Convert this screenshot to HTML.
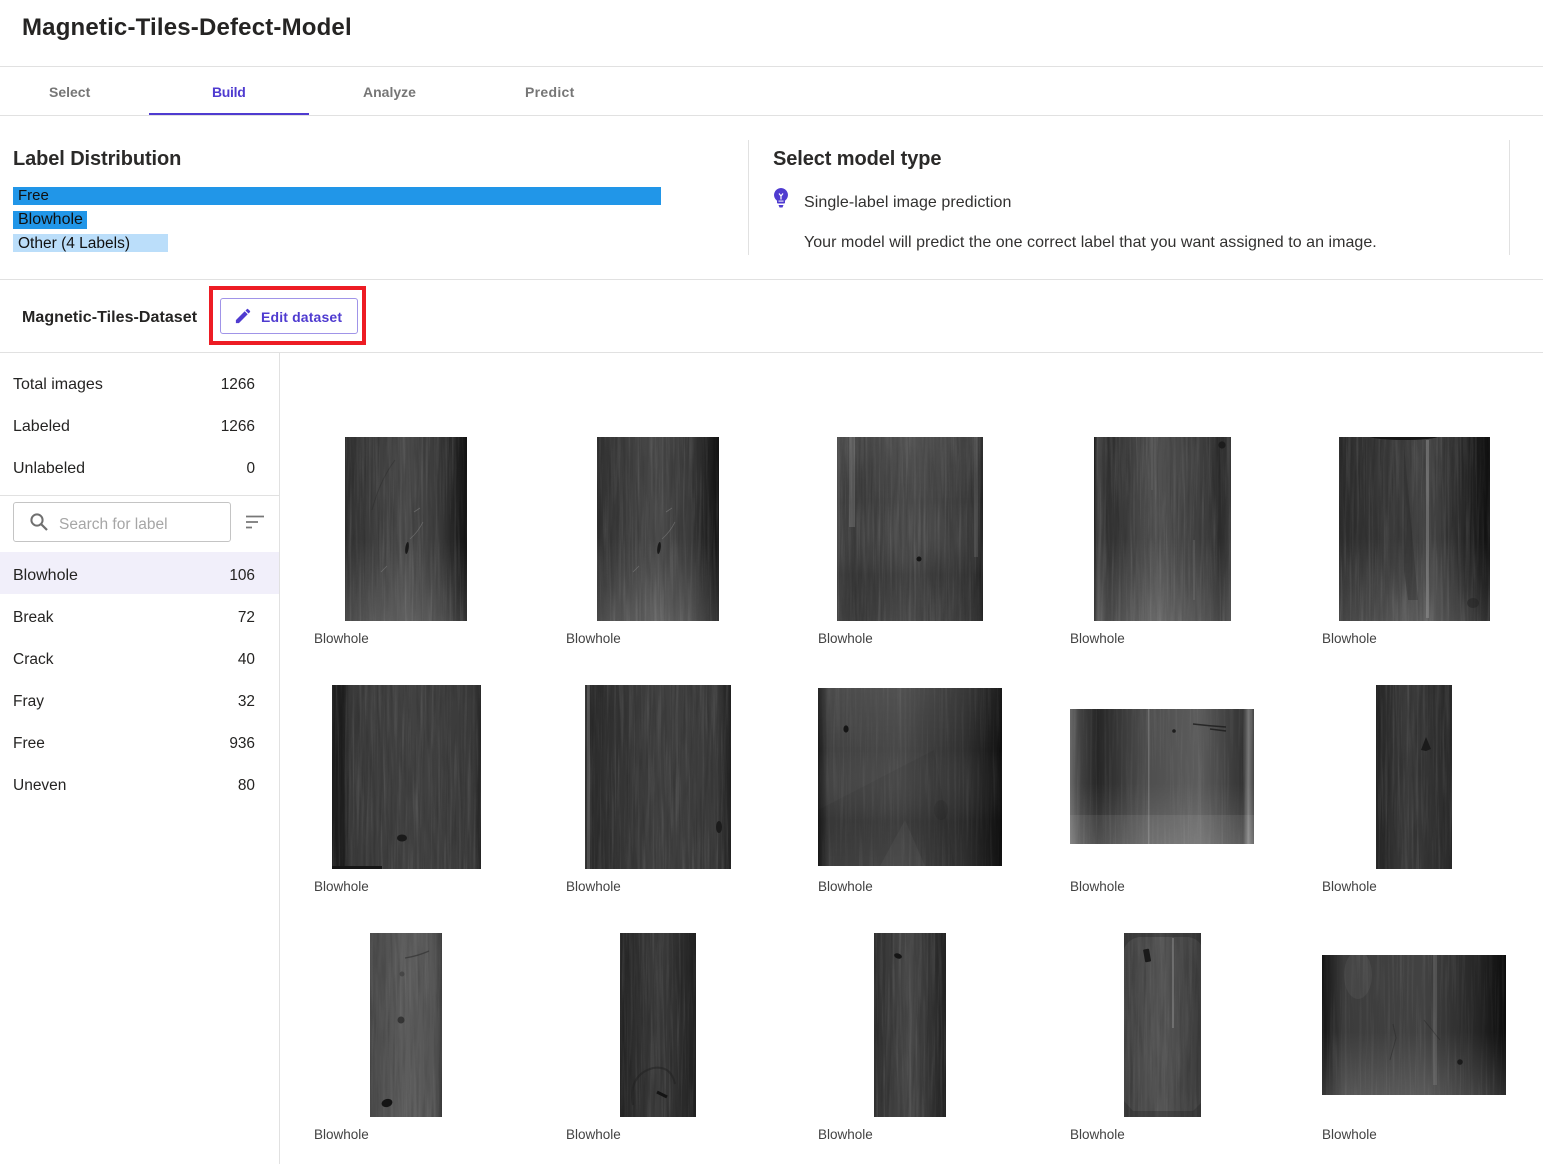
<!DOCTYPE html>
<html lang="en">
<head>
<meta charset="utf-8">
<title>Magnetic-Tiles-Defect-Model</title>
<style>
html,body{margin:0;padding:0;background:#fff}
#p{position:relative;width:1543px;height:1164px;overflow:hidden;background:#fff;font-family:"Liberation Sans",sans-serif;color:#252423}
.t{position:absolute;white-space:nowrap;font-size:15.5px;line-height:20px}
.r{position:absolute;white-space:nowrap;font-size:15.4px;line-height:20px;right:1288px}
.l{position:absolute;background:#e1e1e1}
.h{font-weight:bold;font-size:20px;line-height:26px;color:#2b2a29;letter-spacing:-.1px}
.tab{font-weight:bold;font-size:14px;line-height:18px;color:#767676}
.c{font-size:13.5px;line-height:16px;color:#424242}
.n{opacity:.11}
.m{opacity:.13}
</style>
</head>
<body>
<div id="p">
<div class="t" style="left:22px;top:12px;font-size:24px;line-height:32px;font-weight:bold;color:#252423;letter-spacing:.18px">Magnetic-Tiles-Defect-Model</div>
<div class="l" style="left:0;top:66px;width:1543px;height:1px"></div>
<div class="t tab" style="left:49px;top:83px">Select</div>
<div class="t tab" style="left:212px;top:83px;color:#4f3bd0;letter-spacing:-.3px">Build</div>
<div class="t tab" style="left:363px;top:83px">Analyze</div>
<div class="t tab" style="left:525px;top:83px;letter-spacing:.3px">Predict</div>
<div class="l" style="left:0;top:115px;width:1543px;height:1px"></div>
<div style="position:absolute;left:149px;top:113px;width:160px;height:2px;background:#4f3bd0"></div>

<div class="t h" style="left:13px;top:146px">Label Distribution</div>
<div style="position:absolute;left:13px;top:187px;width:648px;height:18px;background:#2196e8"></div>
<div style="position:absolute;left:13px;top:211px;width:74px;height:18px;background:#2196e8"></div>
<div style="position:absolute;left:13px;top:234px;width:155px;height:18px;background:#bbdefa"></div>
<div class="t" style="left:18px;top:186px;color:#111;font-size:15px">Free</div>
<div class="t" style="left:18px;top:210px;color:#111;font-size:16px">Blowhole</div>
<div class="t" style="left:18px;top:234px;color:#111;font-size:15.5px">Other (4 Labels)</div>

<div class="l" style="left:748px;top:140px;width:1px;height:115px"></div>
<div class="l" style="left:1509px;top:140px;width:1px;height:115px"></div>
<div class="t h" style="left:773px;top:146px">Select model type</div>
<svg style="position:absolute;left:773px;top:187px" width="16" height="21" viewBox="0 0 16 21"><path d="M8 1a7 7 0 0 0-4 12.7V15.5c0 .6.4 1 1 1h6c.6 0 1-.4 1-1v-1.8A7 7 0 0 0 8 1z" fill="#4f3bd0"/><path d="M5.5 18h5l-1 2.5h-3z" fill="#4f3bd0"/><path d="M6 6.5l2 2.5 2-2.5M8 9v3.5" fill="none" stroke="#fff" stroke-width="1.2"/><rect x="5.5" y="13.6" width="5" height="1" fill="#fff"/></svg>
<div class="t" style="left:804px;top:193px;color:#323130;font-size:16px;letter-spacing:.07px">Single-label image prediction</div>
<div class="t" style="left:804px;top:233px;color:#323130;font-size:16px;letter-spacing:.04px">Your model will predict the one correct label that you want assigned to an image.</div>

<div class="l" style="left:0;top:279px;width:1543px;height:1px"></div>
<div class="t" style="left:22px;top:308px;font-weight:bold;font-size:16px;color:#252423;letter-spacing:.05px">Magnetic-Tiles-Dataset</div>
<div style="position:absolute;left:209px;top:286px;width:149px;height:51px;border:4px solid #ed1c24"></div>
<div style="position:absolute;left:220px;top:298px;width:136px;height:34px;border:1px solid #a094e8;border-radius:3px"></div>
<svg style="position:absolute;left:235px;top:308px" width="16" height="16" viewBox="0 0 18 18"><path d="M1 13.6V17h3.4L14.3 7.1l-3.4-3.4zM16.8 4.6a.9.9 0 0 0 0-1.3L14.7 1.2a.9.9 0 0 0-1.3 0l-1.6 1.6 3.4 3.4z" fill="#4f3bd0"/></svg>
<div class="t" style="left:261px;top:307px;font-weight:bold;font-size:14px;color:#4f3bd0;letter-spacing:.15px">Edit dataset</div>
<div class="l" style="left:0;top:352px;width:1543px;height:1px"></div>
<div class="l" style="left:279px;top:352px;width:1px;height:812px"></div>

<div class="t" style="left:13px;top:375px;font-size:16px">Total images</div><div class="r" style="top:375px">1266</div>
<div class="t" style="left:13px;top:417px;font-size:16px">Labeled</div><div class="r" style="top:417px">1266</div>
<div class="t" style="left:13px;top:459px;font-size:16px">Unlabeled</div><div class="r" style="top:459px">0</div>
<div class="l" style="left:0;top:495px;width:279px;height:1px"></div>
<div style="position:absolute;left:13px;top:502px;width:216px;height:38px;border:1px solid #c4c4c4;border-radius:3px"></div>
<svg style="position:absolute;left:29px;top:512px" width="20" height="20" viewBox="0 0 20 20"><circle cx="8" cy="8" r="5.6" fill="none" stroke="#6f6f6f" stroke-width="2"/><path d="M12 12l6 6" stroke="#6f6f6f" stroke-width="2.2"/></svg>
<div class="t" style="left:59px;top:515px;color:#a6a6a6">Search for label</div>
<svg style="position:absolute;left:245px;top:515px" width="20" height="14" viewBox="0 0 20 14"><path d="M1 1.5h18M1 7h12M1 12.5h6" stroke="#777" stroke-width="1.7"/></svg>

<div style="position:absolute;left:0;top:552px;width:279px;height:42px;background:#f1effa"></div>
<div class="t" style="left:13px;top:566px;font-size:16px">Blowhole</div><div class="r" style="top:566px">106</div>
<div class="t" style="left:13px;top:608px">Break</div><div class="r" style="top:608px">72</div>
<div class="t" style="left:13px;top:650px">Crack</div><div class="r" style="top:650px">40</div>
<div class="t" style="left:13px;top:692px">Fray</div><div class="r" style="top:692px">32</div>
<div class="t" style="left:13px;top:734px">Free</div><div class="r" style="top:734px">936</div>
<div class="t" style="left:13px;top:776px">Uneven</div><div class="r" style="top:776px">80</div>

<svg style="position:absolute;left:0;top:0;filter:blur(.3px)" width="1543" height="1164" viewBox="0 0 1543 1164">
<defs>
<filter id="s" x="0" y="0" width="1" height="1" color-interpolation-filters="sRGB">
<feTurbulence type="fractalNoise" baseFrequency="0.42 0.012" numOctaves="3" seed="4"/>
<feColorMatrix type="matrix" values="0 0 0 0 1  0 0 0 0 1  0 0 0 0 1  2.2 0 0 0 -1.02"/>
</filter>
<filter id="d" x="0" y="0" width="1" height="1" color-interpolation-filters="sRGB">
<feTurbulence type="fractalNoise" baseFrequency="0.3 0.02" numOctaves="2" seed="11"/>
<feColorMatrix type="matrix" values="0 0 0 0 0  0 0 0 0 0  0 0 0 0 0  0 2.2 0 0 -1"/>
</filter>
<linearGradient id="b" x1="0" y1="0" x2="0" y2="1"><stop offset=".55" stop-color="#fff" stop-opacity="0"/><stop offset="1" stop-color="#fff" stop-opacity=".13"/></linearGradient>
<linearGradient id="a"><stop offset="0" stop-color="#2e2e2e"/><stop offset=".08" stop-color="#363636"/><stop offset=".5" stop-color="#4a4a4a"/><stop offset=".78" stop-color="#393939"/><stop offset=".94" stop-color="#1d1d1d"/><stop offset="1" stop-color="#131313"/></linearGradient>
<linearGradient id="a3"><stop offset="0" stop-color="#484848"/><stop offset=".1" stop-color="#3a3a3a"/><stop offset=".5" stop-color="#4a4a4a"/><stop offset=".8" stop-color="#404040"/><stop offset=".95" stop-color="#363636"/><stop offset="1" stop-color="#232323"/></linearGradient>
<linearGradient id="a4"><stop offset="0" stop-color="#1a1a1a"/><stop offset=".03" stop-color="#4a4a4a"/><stop offset=".1" stop-color="#303030"/><stop offset=".45" stop-color="#525252"/><stop offset=".85" stop-color="#3a3a3a"/><stop offset=".92" stop-color="#2b2b2b"/><stop offset="1" stop-color="#3c3c3c"/></linearGradient>
<linearGradient id="a5"><stop offset="0" stop-color="#2c2c2c"/><stop offset=".4" stop-color="#3c3c3c"/><stop offset=".6" stop-color="#464646"/><stop offset=".85" stop-color="#262626"/><stop offset="1" stop-color="#0f0f0f"/></linearGradient>
<linearGradient id="a6"><stop offset="0" stop-color="#1d1d1d"/><stop offset=".08" stop-color="#1f1f1f"/><stop offset=".12" stop-color="#3a3a3a"/><stop offset=".55" stop-color="#414141"/><stop offset=".95" stop-color="#3a3a3a"/><stop offset="1" stop-color="#262626"/></linearGradient>
<linearGradient id="a7"><stop offset="0" stop-color="#333"/><stop offset=".05" stop-color="#2c2c2c"/><stop offset=".5" stop-color="#404040"/><stop offset=".9" stop-color="#3a3a3a"/><stop offset="1" stop-color="#222"/></linearGradient>
<linearGradient id="a8"><stop offset="0" stop-color="#1a1a1a"/><stop offset=".06" stop-color="#414141"/><stop offset=".45" stop-color="#484848"/><stop offset=".8" stop-color="#2f2f2f"/><stop offset=".97" stop-color="#151515"/><stop offset="1" stop-color="#0d0d0d"/></linearGradient>
<linearGradient id="a9"><stop offset="0" stop-color="#6a6a6a"/><stop offset=".05" stop-color="#444"/><stop offset=".15" stop-color="#262626"/><stop offset=".42" stop-color="#4e4e4e"/><stop offset=".7" stop-color="#5c5c5c"/><stop offset=".94" stop-color="#333"/><stop offset=".97" stop-color="#777"/><stop offset="1" stop-color="#444"/></linearGradient>
<linearGradient id="a10"><stop offset="0" stop-color="#252525"/><stop offset=".4" stop-color="#3c3c3c"/><stop offset="1" stop-color="#2a2a2a"/></linearGradient>
<linearGradient id="a11"><stop offset="0" stop-color="#4a4a4a"/><stop offset=".5" stop-color="#5d5d5d"/><stop offset=".9" stop-color="#555"/><stop offset="1" stop-color="#3c3c3c"/></linearGradient>
<linearGradient id="a12"><stop offset="0" stop-color="#262626"/><stop offset=".5" stop-color="#3c3c3c"/><stop offset="1" stop-color="#222"/></linearGradient>
<linearGradient id="a13"><stop offset="0" stop-color="#303030"/><stop offset=".5" stop-color="#4a4a4a"/><stop offset="1" stop-color="#232323"/></linearGradient>
<linearGradient id="a14"><stop offset="0" stop-color="#434343"/><stop offset=".5" stop-color="#565656"/><stop offset="1" stop-color="#3c3c3c"/></linearGradient>
<linearGradient id="a15"><stop offset="0" stop-color="#141414"/><stop offset=".12" stop-color="#3c3c3c"/><stop offset=".55" stop-color="#424242"/><stop offset=".85" stop-color="#252525"/><stop offset="1" stop-color="#0c0c0c"/></linearGradient>
<linearGradient id="sh" x1="0" y1="0" x2="0" y2="1"><stop offset="0" stop-color="#fff" stop-opacity=".05"/><stop offset=".35" stop-color="#fff" stop-opacity="0"/><stop offset=".75" stop-color="#000" stop-opacity=".1"/><stop offset="1" stop-color="#000" stop-opacity="0"/></linearGradient>
</defs>

<!-- row 1 -->
<g>
<rect x="345" y="437" width="122" height="184" fill="url(#a)"/><rect x="345" y="437" width="122" height="184" filter="url(#s)" class="n"/><rect x="345" y="437" width="122" height="184" filter="url(#d)" class="m"/><rect x="345" y="437" width="122" height="184" fill="url(#b)"/>
<ellipse cx="407" cy="548" rx="1.7" ry="6" fill="#191919" transform="rotate(8 407 548)"/><path d="M410 539Q418 532 423 522M387 566l-6 6M414 512l6-4" stroke="#777" stroke-width=".8" fill="none" opacity=".7"/><path d="M395 460Q380 480 372 510" stroke="#222" stroke-width="1" fill="none" opacity=".3"/>
</g>
<g>
<rect x="597" y="437" width="122" height="184" fill="url(#a)"/><rect x="597" y="437" width="122" height="184" filter="url(#s)" class="n"/><rect x="597" y="437" width="122" height="184" filter="url(#d)" class="m"/><rect x="597" y="437" width="122" height="184" fill="url(#b)"/>
<ellipse cx="659" cy="548" rx="1.7" ry="6" fill="#191919" transform="rotate(8 659 548)"/><path d="M662 539Q670 532 675 522M639 566l-6 6M666 512l6-4" stroke="#777" stroke-width=".8" fill="none" opacity=".7"/>
</g>
<g>
<rect x="837" y="437" width="146" height="184" fill="url(#a3)"/><rect x="837" y="437" width="146" height="184" filter="url(#s)" class="n"/><rect x="837" y="437" width="146" height="184" filter="url(#d)" class="m"/><rect x="837" y="437" width="146" height="184" fill="url(#sh)"/>
<rect x="849" y="437" width="6" height="90" fill="#fff" opacity=".14"/><rect x="974" y="437" width="4" height="120" fill="#fff" opacity=".1"/><circle cx="919" cy="559" r="2.5" fill="#151515"/>
</g>
<g>
<rect x="1094" y="437" width="137" height="184" fill="url(#a4)"/><rect x="1094" y="437" width="137" height="184" filter="url(#s)" class="n"/><rect x="1094" y="437" width="137" height="184" filter="url(#d)" class="m"/><rect x="1094" y="437" width="137" height="184" fill="url(#b)"/>
<circle cx="1222" cy="445" r="3.6" fill="#1c1c1c"/><path d="M1194 540V600" stroke="#888" stroke-width="1" opacity=".5"/><path d="M1152 437V490" stroke="#888" stroke-width="1" opacity=".35"/>
</g>
<g>
<rect x="1339" y="437" width="151" height="184" fill="url(#a5)"/><rect x="1339" y="437" width="151" height="184" filter="url(#s)" class="n"/><rect x="1339" y="437" width="151" height="184" filter="url(#d)" class="m"/><rect x="1339" y="437" width="151" height="184" fill="url(#b)"/>
<path d="M1370 437h68q-10 3-34 3t-34-3z" fill="#161616"/><rect x="1426" y="440" width="3" height="178" fill="#9a9a9a" opacity=".45"/><path d="M1404 445L1418 600 1408 600 1404 570z" fill="#1d1d1d" opacity=".25"/><ellipse cx="1473" cy="603" rx="6" ry="5" fill="#222" opacity=".5"/>
</g>
<!-- row 2 -->
<g>
<rect x="332" y="685" width="149" height="184" fill="url(#a6)"/><rect x="332" y="685" width="149" height="184" filter="url(#s)" class="n"/><rect x="332" y="685" width="149" height="184" filter="url(#d)" class="m"/>
<ellipse cx="402" cy="838" rx="5" ry="3.5" fill="#1a1a1a"/><rect x="332" y="866" width="50" height="3" fill="#161616"/>
</g>
<g>
<rect x="585" y="685" width="146" height="184" fill="url(#a7)"/><rect x="585" y="685" width="146" height="184" filter="url(#s)" class="n"/><rect x="585" y="685" width="146" height="184" filter="url(#d)" class="m"/>
<rect x="587" y="685" width="3" height="184" fill="#9a9a9a" opacity=".3"/><ellipse cx="719" cy="827" rx="3" ry="6" fill="#1c1c1c"/>
</g>
<g>
<rect x="818" y="688" width="184" height="178" fill="url(#a8)"/><rect x="818" y="688" width="184" height="178" filter="url(#s)" opacity=".07"/><rect x="818" y="688" width="184" height="178" fill="url(#sh)"/>
<path d="M818 810L934 750 955 866H818z" fill="#000" opacity=".05"/><ellipse cx="846" cy="729" rx="2.6" ry="3.6" fill="#151515"/><ellipse cx="941" cy="810" rx="7" ry="10" fill="#000" opacity=".08"/><path d="M880 866L905 820 925 866z" fill="#fff" opacity=".04"/>
</g>
<g>
<rect x="1070" y="709" width="184" height="135" fill="url(#a9)"/><rect x="1070" y="709" width="184" height="135" filter="url(#s)" opacity=".07"/><rect x="1070" y="709" width="184" height="135" fill="url(#b)"/>
<rect x="1070" y="815" width="184" height="29" fill="#fff" opacity=".07"/><rect x="1148" y="709" width="1.5" height="135" fill="#bbb" opacity=".3"/><circle cx="1174" cy="731" r="1.8" fill="#1e1e1e"/><path d="M1193 724Q1210 726 1226 727M1210 729l16 2" stroke="#1b1b1b" stroke-width="1.4" fill="none" opacity=".8"/>
</g>
<g>
<rect x="1376" y="685" width="76" height="184" fill="url(#a10)"/><rect x="1376" y="685" width="76" height="184" filter="url(#s)" class="n"/><rect x="1376" y="685" width="76" height="184" filter="url(#d)" class="m"/>
<path d="M1421 750l5-13 5 12-5 2z" fill="#1b1b1b"/>
</g>
<!-- row 3 -->
<g>
<rect x="370" y="933" width="72" height="184" fill="url(#a11)"/><rect x="370" y="933" width="72" height="184" filter="url(#s)" opacity=".07"/><rect x="370" y="933" width="72" height="184" filter="url(#d)" class="m"/>
<ellipse cx="387" cy="1103" rx="5.5" ry="4" fill="#141414" transform="rotate(-15 387 1103)"/><circle cx="401" cy="1020" r="3.5" fill="#2a2a2a" opacity=".8"/><circle cx="402" cy="974" r="2.5" fill="#303030" opacity=".5"/><path d="M405 958Q418 956 429 951" stroke="#333" stroke-width="1.3" fill="none" opacity=".7"/>
</g>
<g>
<rect x="620" y="933" width="76" height="184" fill="url(#a12)"/><rect x="620" y="933" width="76" height="184" filter="url(#s)" class="n"/><rect x="620" y="933" width="76" height="184" filter="url(#d)" class="m"/>
<path d="M633 1105q-5-30 20-37 18-3 22 16" stroke="#1f1f1f" stroke-width="2" fill="none" opacity=".5"/><path d="M657 1092l10 5" stroke="#141414" stroke-width="3"/>
</g>
<g>
<rect x="874" y="933" width="72" height="184" fill="url(#a13)"/><rect x="874" y="933" width="72" height="184" filter="url(#s)" class="n"/><rect x="874" y="933" width="72" height="184" filter="url(#d)" class="m"/>
<ellipse cx="898" cy="956" rx="4" ry="2.5" fill="#151515" transform="rotate(20 898 956)"/>
</g>
<g>
<rect x="1124" y="933" width="77" height="184" fill="url(#a14)"/><rect x="1124" y="933" width="77" height="184" filter="url(#s)" opacity=".07"/><rect x="1124" y="933" width="77" height="184" filter="url(#d)" class="m"/>
<path d="M1124 933h77v12q-3-6-12-8h-50q-11 2-15 12z" fill="#222" opacity=".35"/><path d="M1124 1117h77v-14l-8 8h-60l-9-10z" fill="#222" opacity=".3"/><rect x="1144" y="949" width="6" height="13" rx="1" fill="#1a1a1a" transform="rotate(-10 1147 955)"/><rect x="1172" y="938" width="2" height="90" fill="#aaa" opacity=".35"/>
</g>
<g>
<rect x="1322" y="955" width="184" height="140" fill="url(#a15)"/><rect x="1322" y="955" width="184" height="140" filter="url(#s)" opacity=".08"/><rect x="1322" y="955" width="184" height="140" fill="url(#b)"/>
<ellipse cx="1358" cy="975" rx="14" ry="24" fill="#fff" opacity=".05"/><rect x="1433" y="955" width="4" height="130" fill="#aaa" opacity=".2"/><circle cx="1460" cy="1062" r="2.8" fill="#1b1b1b"/><path d="M1390 1060l6-22 -3-14M1424 1020l16 20" stroke="#222" stroke-width="1" fill="none" opacity=".4"/>
</g>
</svg>

<div class="t c" style="left:314px;top:631px">Blowhole</div><div class="t c" style="left:566px;top:631px">Blowhole</div><div class="t c" style="left:818px;top:631px">Blowhole</div><div class="t c" style="left:1070px;top:631px">Blowhole</div><div class="t c" style="left:1322px;top:631px">Blowhole</div>
<div class="t c" style="left:314px;top:879px">Blowhole</div><div class="t c" style="left:566px;top:879px">Blowhole</div><div class="t c" style="left:818px;top:879px">Blowhole</div><div class="t c" style="left:1070px;top:879px">Blowhole</div><div class="t c" style="left:1322px;top:879px">Blowhole</div>
<div class="t c" style="left:314px;top:1127px">Blowhole</div><div class="t c" style="left:566px;top:1127px">Blowhole</div><div class="t c" style="left:818px;top:1127px">Blowhole</div><div class="t c" style="left:1070px;top:1127px">Blowhole</div><div class="t c" style="left:1322px;top:1127px">Blowhole</div>
</div>
</body>
</html>
